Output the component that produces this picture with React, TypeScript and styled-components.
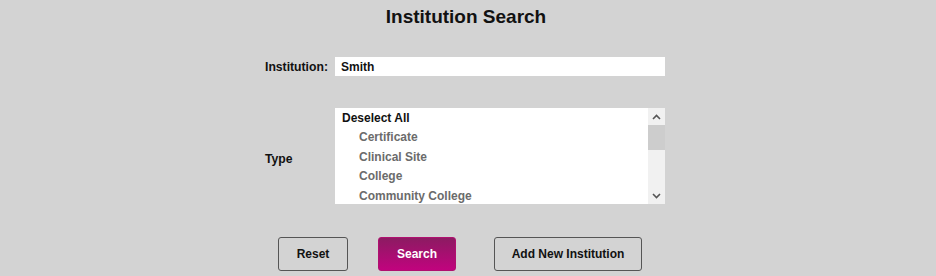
import React from 'react';
import styled, { createGlobalStyle } from 'styled-components';

const GlobalStyle = createGlobalStyle`
  html, body {
    margin: 0;
    padding: 0;
    background: #d3d3d3;
  }
  body {
    font-family: "Liberation Sans", Arial, sans-serif;
    color: #111;
  }
`;

const Page = styled.div`
  width: 936px;
  height: 276px;
  display: flex;
  flex-direction: column;
  align-items: center;
  overflow: hidden;
`;

const Title = styled.h1`
  margin: 6px 0 0;
  font-size: 19px;
  line-height: 22px;
  font-weight: bold;
  color: #111;
  transform: translateX(-2px);
`;

const Form = styled.div`
  width: 400px;
  margin-left: -6px;
  display: flex;
  flex-direction: column;
`;

const Row = styled.div<{ $top: number }>`
  display: flex;
  align-items: center;
  margin-top: ${p => p.$top}px;
`;

const Label = styled.label<{ $drop?: number }>`
  width: 70px;
  padding-top: ${p => p.$drop || 0}px;
  font-size: 12.2px;
  font-weight: bold;
  color: #111;
`;

const TextInput = styled.input`
  flex: 1;
  height: 19px;
  box-sizing: border-box;
  border: none;
  outline: none;
  padding: 0 6px;
  background: #fff;
  font-family: "Liberation Sans", Arial, sans-serif;
  font-size: 12px;
  font-weight: bold;
  color: #111;
`;

const ListBox = styled.div`
  flex: 1;
  height: 96px;
  display: flex;
  background: #fff;
`;

const Options = styled.ul`
  flex: 1;
  margin: 0;
  padding: 1px 0 0;
  list-style: none;
  overflow: hidden;
`;

const Option = styled.li<{ $head?: boolean }>`
  height: 19.4px;
  line-height: 19.4px;
  font-size: 12px;
  font-weight: bold;
  padding-left: ${p => (p.$head ? 7 : 24)}px;
  color: ${p => (p.$head ? '#111' : '#6b6b6b')};
  white-space: nowrap;
`;

const Scrollbar = styled.div`
  width: 17px;
  background: #f1f1f1;
  display: flex;
  flex-direction: column;
`;

const Arrow = styled.div`
  height: 17px;
  display: flex;
  align-items: center;
  justify-content: center;
`;

const Track = styled.div`
  flex: 1;
  display: flex;
  flex-direction: column;
`;

const Thumb = styled.div`
  height: 25px;
  background: #cdcdcd;
`;

const Buttons = styled.div`
  display: flex;
  margin-top: 33px;
  margin-left: -16px;
`;

const Button = styled.button<{ $w: number; $gap: number; $primary?: boolean }>`
  width: ${p => p.$w}px;
  height: 34px;
  margin-left: ${p => p.$gap}px;
  box-sizing: border-box;
  border-radius: 3px;
  border: 1px solid ${p => (p.$primary ? '#b0106f' : '#555')};
  background: ${p => (p.$primary ? 'linear-gradient(#8c1b62, #c1037e)' : 'transparent')};
  color: ${p => (p.$primary ? '#fff' : '#111')};
  font-family: "Liberation Sans", Arial, sans-serif;
  font-size: 12px;
  font-weight: bold;
  cursor: pointer;
`;

const Chevron = ({ up }: { up?: boolean }) => (
  <svg width="9" height="6" viewBox="0 0 9 6">
    <path
      d={up ? 'M1 5 L4.5 1.5 L8 5' : 'M1 1 L4.5 4.5 L8 1'}
      fill="none"
      stroke="#555"
      strokeWidth="1.6"
    />
  </svg>
);

const types = ['Certificate', 'Clinical Site', 'College', 'Community College'];

const App = () => {
  return (
    <Page>
      <GlobalStyle />
      <Title>Institution Search</Title>
      <Form>
        <Row $top={29}>
          <Label>Institution:</Label>
          <TextInput type="text" defaultValue="Smith" />
        </Row>
        <Row $top={32}>
          <Label $drop={6}>Type</Label>
          <ListBox>
            <Options>
              <Option $head>Deselect All</Option>
              {types.map(t => (
                <Option key={t}>{t}</Option>
              ))}
            </Options>
            <Scrollbar>
              <Arrow><Chevron up /></Arrow>
              <Track><Thumb /></Track>
              <Arrow><Chevron /></Arrow>
            </Scrollbar>
          </ListBox>
        </Row>
      </Form>
      <Buttons>
        <Button $w={70} $gap={0}>Reset</Button>
        <Button $w={78} $gap={30} $primary>Search</Button>
        <Button $w={148} $gap={38}>Add New Institution</Button>
      </Buttons>
    </Page>
  );
};

export default App;
